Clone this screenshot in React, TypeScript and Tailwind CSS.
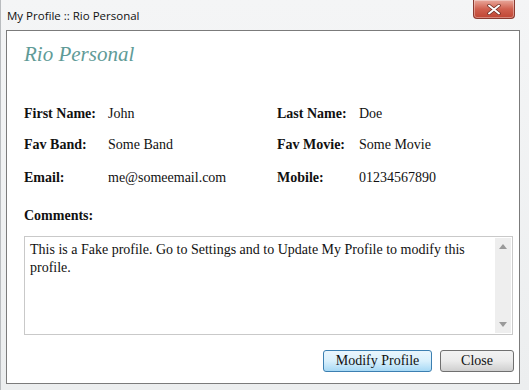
import React from "react";

const serif = { fontFamily: '"Liberation Serif", "Times New Roman", serif' };

function Row({ l1, v1, l2, v2, cls }: { l1: string; v1: string; l2: string; v2: string; cls: string }) {
  return (
    <div className={`flex h-[18px] items-center text-[14px] text-[#111] ${cls}`}>
      <div className="w-[84px] font-bold">{l1}</div>
      <div className="w-[169px]">{v1}</div>
      <div className="w-[82px] font-bold">{l2}</div>
      <div>{v2}</div>
    </div>
  );
}

export default function App() {
  return (
    <div className="relative w-[529px] h-[390px] overflow-hidden bg-gradient-to-b from-[#f4f5f6] to-[#eceeef] border-l border-[#b9bcbf]">
      <div className="flex h-[30px] items-start justify-between">
        <div
          className="pl-[6px] pt-[7px] text-[11.5px] text-[#111]"
          style={{ fontFamily: '"Open Sans", "Noto Sans", sans-serif' }}
        >
          My Profile :: Rio Personal
        </div>
        <div className="mr-[14px] flex h-[19px] w-[42px] items-center justify-center rounded-b-[4px] border border-t-0 border-[#8a3a30] bg-gradient-to-b from-[#e8a89c] via-[#d0604f] to-[#bf4533] shadow-[inset_0_0_0_1px_rgba(255,255,255,0.35)]">
          <svg width="14" height="11" viewBox="0 0 14 11">
            <path d="M2 1.5 L12 9.5 M12 1.5 L2 9.5" stroke="#6a2a20" strokeWidth="3.4" strokeLinecap="round" />
            <path d="M2 1.5 L12 9.5 M12 1.5 L2 9.5" stroke="#ffffff" strokeWidth="2" strokeLinecap="round" />
          </svg>
        </div>
      </div>
      <div
        className="ml-[5px] w-[514px] h-[354px] border border-[#7b7b7b] bg-white pl-[17px] pr-[5px]"
        style={serif}
      >
        <div className="mt-[11px] h-[24px] text-[21px] italic text-[#5f9b97] leading-[24px]">Rio Personal</div>
        <Row cls="mt-[38px]" l1="First Name:" v1="John" l2="Last Name:" v2="Doe" />
        <Row cls="mt-[13px]" l1="Fav Band:" v1="Some Band" l2="Fav Movie:" v2="Some Movie" />
        <Row cls="mt-[15px]" l1="Email:" v1="me@someemail.com" l2="Mobile:" v2="01234567890" />
        <div className="mt-[21px] h-[18px] text-[14px] font-bold text-[#111] leading-[18px]">Comments:</div>
        <div className="mt-[11px] flex h-[99px] w-[489px] border border-[#c9c9c9] bg-white">
          <div className="flex-1 pl-[5px] pt-[4px] text-[14px] leading-[18px] text-[#111]">
            This is a Fake profile. Go to Settings and to Update My Profile to modify this profile.
          </div>
          <div className="my-[1px] mr-[1px] flex w-[16px] flex-col items-center justify-between bg-[#eeeeee] py-[6px]">
            <svg width="8" height="5" viewBox="0 0 8 5"><path d="M0 5 L4 0 L8 5 Z" fill="#9a9a9a" /></svg>
            <svg width="8" height="5" viewBox="0 0 8 5"><path d="M0 0 L4 5 L8 0 Z" fill="#9a9a9a" /></svg>
          </div>
        </div>
        <div className="mt-[15px] flex justify-end gap-[8px]">
          <button className="h-[22px] w-[109px] rounded-[3px] border border-[#3c7fb1] bg-gradient-to-b from-[#eaf6fd] via-[#d9f0fc] to-[#a7d9f5] text-[14px] leading-[20px] text-[#111]">
            Modify Profile
          </button>
          <button className="h-[22px] w-[74px] rounded-[3px] border border-[#707070] bg-gradient-to-b from-[#f2f2f2] via-[#ebebeb] to-[#cfcfcf] text-[14px] leading-[20px] text-[#111]">
            Close
          </button>
        </div>
      </div>
    </div>
  );
}
